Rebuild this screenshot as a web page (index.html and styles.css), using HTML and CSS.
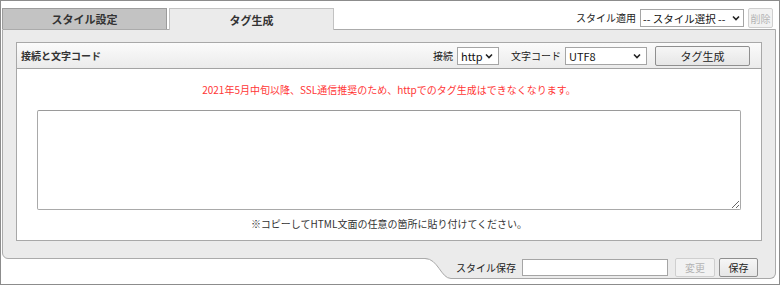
FILE: index.html
```html
<!DOCTYPE html>
<html lang="ja">

<head>
    <meta charset="UTF-8">
    <meta name="viewport" content="width=device-width, initial-scale=1.0">
    <title>タグ生成</title>
    <link rel="stylesheet" href="styles.css">
</head>

<body>
    <div class="frame">
        <!-- Tabs + style apply -->
        <div class="topbar">
            <div class="tabs">
                <div class="tab">スタイル設定</div>
                <div class="tab active">タグ生成</div>
            </div>
            <div class="apply">
                <span class="label">スタイル適用</span>
                <select class="sel sel-style">
                    <option>-- スタイル選択 --</option>
                </select>
                <button class="btn btn-del" disabled>削除</button>
            </div>
        </div>

        <div class="panel">
            <div class="codebox">
                <div class="codebox-head">
                    <span class="head-title">接続と文字コード</span>
                    <div class="head-controls">
                        <span class="label">接続</span>
                        <select class="sel sel-proto">
                            <option>http</option>
                        </select>
                        <span class="label label-charset">文字コード</span>
                        <select class="sel sel-charset">
                            <option>UTF8</option>
                        </select>
                        <button class="btn btn-gen">タグ生成</button>
                    </div>
                </div>
                <div class="codebox-body">
                    <p class="notice">2021年5月中旬以降、SSL通信推奨のため、httpでのタグ生成はできなくなります。</p>
                    <textarea class="tag-output"></textarea>
                    <p class="hint">※コピーしてHTML文面の任意の箇所に貼り付けてください。</p>
                </div>
            </div>
        </div>

        <!-- Style save -->
        <div class="savebar">
            <svg class="save-curve" width="26" height="24" viewBox="0 0 26 24">
                <path d="M0 0 H26 V23.5 C16 23.5 13 3.5 0 3.5 Z" fill="#ebebeb" />
                <path d="M0 3.5 C13 3.5 16 23.5 26 23.5" fill="none" stroke="#a8a8a8" />
            </svg>
            <div class="save-body">
                <span class="label">スタイル保存</span>
                <input type="text" class="save-name">
                <button class="btn btn-change" disabled>変更</button>
                <button class="btn btn-save">保存</button>
            </div>
        </div>
    </div>
</body>

</html>
```

FILE: styles.css
```css
body {
    margin: 0;
    padding: 0;
    font-family: "Noto Sans CJK JP", "Noto Sans", sans-serif;
    font-size: 10px;
    color: #222;
    background-color: #fff;
}

.frame {
    box-sizing: border-box;
    width: 780px;
    height: 285px;
    border: 1px solid #8c8c8c;
}

/* Tabs */
.topbar {
    display: flex;
    justify-content: space-between;
    align-items: flex-end;
    padding: 7px 6px 0 1px;
}

.tabs {
    display: flex;
    gap: 2px;
    align-items: flex-end;
}

.tab {
    box-sizing: border-box;
    width: 165px;
    height: 21px;
    display: flex;
    justify-content: center;
    align-items: center;
    font-size: 11px;
    font-weight: bold;
    color: #333;
    background-color: #c3c3c3;
    border: 1px solid #9c9c9c;
    border-bottom: none;
}

.tab.active {
    height: 22px;
    margin-bottom: -1px;
    background-color: #ebebeb;
    border-color: #c2c2c2;
    position: relative;
    z-index: 1;
}

.apply {
    align-self: flex-start;
    display: flex;
    align-items: center;
    gap: 4px;
    height: 20px;
}

.label {
    white-space: nowrap;
    line-height: 14px;
}

/* Selects and buttons */
.sel {
    appearance: none;
    -webkit-appearance: none;
    box-sizing: border-box;
    height: 18px;
    padding: 0 14px 0 3px;
    font-family: inherit;
    font-size: 11px;
    color: #111;
    border: 1px solid #a5a5a5;
    border-radius: 0;
    background: #fff url("data:image/svg+xml,%3Csvg xmlns='http://www.w3.org/2000/svg' width='8' height='6'%3E%3Cpath d='M1 1.5 L4 4.5 L7 1.5' fill='none' stroke='%23222' stroke-width='1.6'/%3E%3C/svg%3E") no-repeat right 5px center;
}

.sel-style {
    width: 104px;
    padding: 0 11px 0 2px;
    font-size: 10.5px;
    background-position: right 3px center;
}

.sel-proto {
    width: 42px;
}

.sel-charset {
    width: 82px;
}

.btn {
    box-sizing: border-box;
    height: 19px;
    padding: 0 4px;
    font-family: inherit;
    font-size: 10px;
    color: #222;
    background: linear-gradient(#f6f6f6, #e6e6e6);
    border: 1px solid #8f8f8f;
    border-radius: 2px;
    cursor: pointer;
}

.btn:disabled {
    color: #b4b4b4;
    background: #f2f2f2;
    border-color: #cfcfcf;
    cursor: default;
}

.btn-del {
    width: 25px;
    height: 20px;
    padding: 0;
}

/* Panel */
.panel {
    margin: 0 3px 0 1px;
    padding: 12px 13px 17px;
    background-color: #ebebeb;
    border: 1px solid #ababab;
    border-radius: 0 0 0 6px;
}

.codebox {
    background-color: #fff;
    border: 1px solid #a8a8a8;
}

.codebox-head {
    height: 25px;
    display: flex;
    justify-content: space-between;
    align-items: center;
    padding: 0 11px 0 4px;
    background: linear-gradient(#fbfbfb, #ebebeb);
    border-bottom: 1px solid #a3a3a3;
}

.head-title {
    font-weight: bold;
    color: #333;
}

.head-controls {
    display: flex;
    align-items: center;
    gap: 4px;
}

.label-charset {
    margin-left: 8px;
}

.btn-gen {
    width: 95px;
    height: 20px;
    margin-left: 4px;
    font-size: 11px;
}

.codebox-body {
    padding: 13px 20px 8px;
    text-align: center;
}

.notice {
    margin: 0;
    line-height: 16px;
    color: #ff3636;
}

.tag-output {
    display: block;
    box-sizing: border-box;
    width: 100%;
    height: 100px;
    margin: 12px 0 6px;
    border: 1px solid #a9a9a9;
    border-top-color: #9a9a9a;
    border-radius: 2px;
}

.hint {
    margin: 0;
    line-height: 16px;
    color: #333;
}

/* Style save bar */
.savebar {
    display: flex;
    justify-content: flex-end;
    margin: -4px 3px 0 0;
}

.save-curve {
    display: block;
}

.save-body {
    box-sizing: border-box;
    height: 24px;
    display: flex;
    align-items: center;
    gap: 6px;
    padding: 2px 17px 0 5px;
    background-color: #ebebeb;
    border-right: 1px solid #ababab;
    border-bottom: 1px solid #a8a8a8;
    border-radius: 0 0 6px 0;
}

.save-name {
    box-sizing: border-box;
    width: 146px;
    height: 17px;
    margin-right: 1px;
    border: 1px solid #a5a5a5;
    border-radius: 0;
}

.btn-change {
    width: 40px;
}

.btn-save {
    width: 39px;
    margin-left: -2px;
}
```
